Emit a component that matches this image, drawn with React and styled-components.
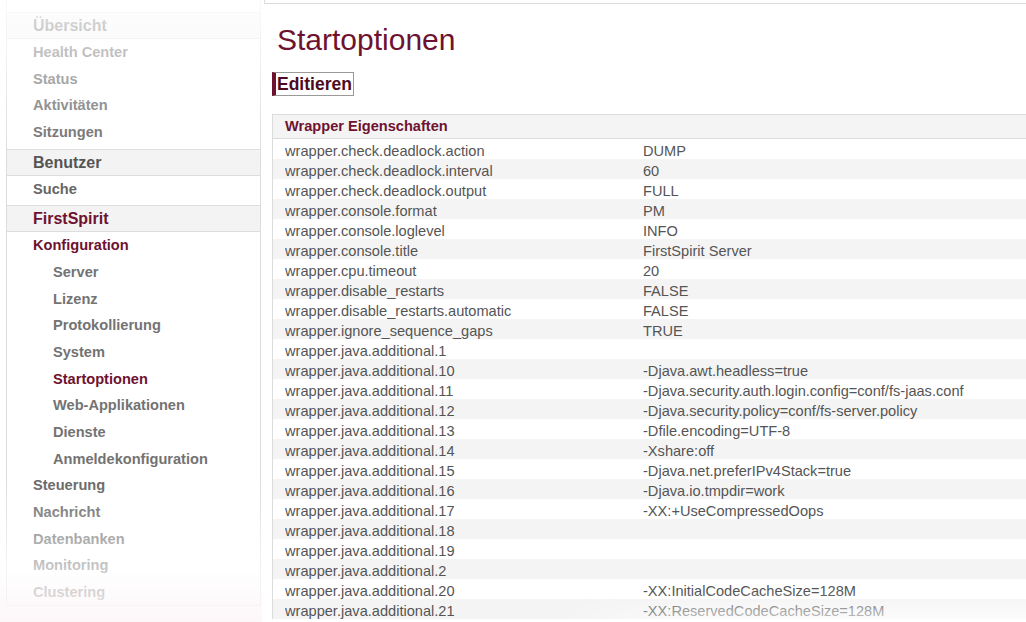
import React from "react";
import styled, { createGlobalStyle } from "styled-components";

const MAROON = "#6e1230";

const GlobalStyle = createGlobalStyle`
  html, body {
    margin: 0;
    padding: 0;
    background: #ffffff;
    overflow: hidden;
  }
  body {
    font-family: "Liberation Sans", Arial, Helvetica, sans-serif;
    -webkit-font-smoothing: antialiased;
  }
`;

const Page = styled.div`
  display: flex;
  align-items: flex-start;
  width: 1026px;
  height: 622px;
  overflow: hidden;
`;

const Sidebar = styled.nav`
  position: relative;
  flex: 0 0 255px;
  box-sizing: border-box;
  margin-left: 6px;
  padding-top: 9px;
  display: flex;
  flex-direction: column;
  border: 1px solid #dcdcdc;
  border-top: none;

  &::before {
    content: "";
    position: absolute;
    left: -2px;
    right: -2px;
    top: 0;
    height: 160px;
    pointer-events: none;
    background: linear-gradient(
      to bottom,
      rgba(255, 255, 255, 0.84) 0%,
      rgba(255, 255, 255, 0.62) 30%,
      rgba(255, 255, 255, 0.38) 55%,
      rgba(255, 255, 255, 0) 100%
    );
  }

  &::after {
    content: "";
    position: absolute;
    left: -8px;
    right: -2px;
    bottom: -18px;
    height: 143px;
    pointer-events: none;
    background: linear-gradient(
      to top,
      rgba(252, 245, 247, 0.88) 0%,
      rgba(253, 248, 249, 0.8) 14%,
      rgba(255, 255, 255, 0.64) 37%,
      rgba(255, 255, 255, 0.48) 57%,
      rgba(255, 255, 255, 0.22) 77%,
      rgba(255, 255, 255, 0) 100%
    );
  }
`;

const NavHeader = styled.div`
  box-sizing: border-box;
  height: 27px;
  margin-top: 3px;
  padding-left: 26px;
  border-top: 1px solid #dedede;
  border-bottom: 1px solid #dedede;
  background: #f3f3f3;
  color: ${(p) => (p.$active ? MAROON : "#555555")};
  font-size: 16px;
  font-weight: bold;
  line-height: 25px;
  white-space: nowrap;
`;

const NavItem = styled.div`
  height: 26.67px;
  padding-left: ${(p) => (p.$sub ? "46px" : "26px")};
  color: ${(p) => (p.$active ? MAROON : p.$sub ? "#737373" : "#666666")};
  font-size: 14.6px;
  font-weight: bold;
  line-height: 26.67px;
  white-space: nowrap;
`;

const Main = styled.main`
  position: relative;
  flex: 1 1 auto;
  min-width: 0;
  margin-left: 3px;
  display: flex;
  flex-direction: column;
  align-items: flex-start;
  height: 622px;
  overflow: hidden;

  &::after {
    content: "";
    position: absolute;
    right: 0;
    bottom: 0;
    width: 480px;
    height: 30px;
    pointer-events: none;
    background: linear-gradient(
      to top,
      rgba(255, 255, 255, 0.7) 0%,
      rgba(255, 255, 255, 0.45) 40%,
      rgba(255, 255, 255, 0) 100%
    );
    -webkit-mask-image: linear-gradient(to right, transparent 0%, #000 32%);
    mask-image: linear-gradient(to right, transparent 0%, #000 32%);
  }
`;

const TopBar = styled.div`
  align-self: stretch;
  height: 3px;
  border-left: 1px solid #dcdcdc;
  border-bottom: 1px solid #dcdcdc;
`;

const Content = styled.div`
  display: flex;
  flex-direction: column;
  align-items: flex-start;
  padding-left: 8px;
`;

const Title = styled.h1`
  margin: 18px 0 0 0;
  padding-left: 5px;
  color: ${MAROON};
  font-size: 30px;
  font-weight: normal;
  line-height: 36px;
  white-space: nowrap;
`;

const EditButton = styled.button`
  margin-top: 14px;
  box-sizing: border-box;
  height: 24px;
  padding: 0 1px 0 1px;
  border: 1px solid #9a9a9a;
  border-left: 4px solid ${MAROON};
  border-radius: 0;
  background: #ffffff;
  color: #4e0a22;
  font-family: inherit;
  font-size: 17.5px;
  font-weight: bold;
  line-height: 22px;
  cursor: pointer;
`;

const Table = styled.div`
  margin-top: 18px;
  width: 820px;
  border-left: 1px solid #dcdcdc;
`;

const TableHead = styled.div`
  box-sizing: border-box;
  height: 25px;
  padding-left: 12px;
  border-top: 1px solid #dcdcdc;
  border-bottom: 1px solid #dcdcdc;
  background: #f4f4f4;
  color: ${MAROON};
  font-size: 14.6px;
  font-weight: bold;
  line-height: 23px;
`;

const Row = styled.div`
  display: grid;
  grid-template-columns: 358px 1fr;
  box-sizing: border-box;
  height: 20px;
  padding: 2px 0 0 12px;
  overflow: hidden;
  background: ${(p) => (p.$odd ? "#f4f4f4" : "#ffffff")};
  color: #555555;
  font-size: 14.6px;
  line-height: 20px;
  white-space: nowrap;
`;

const Cell = styled.span`
  overflow: hidden;
`;

const nav = [
  { type: "header", label: "Übersicht" },
  { label: "Health Center" },
  { label: "Status" },
  { label: "Aktivitäten" },
  { label: "Sitzungen" },
  { type: "header", label: "Benutzer" },
  { label: "Suche" },
  { type: "header", label: "FirstSpirit", active: true },
  { label: "Konfiguration", active: true },
  { label: "Server", sub: true },
  { label: "Lizenz", sub: true },
  { label: "Protokollierung", sub: true },
  { label: "System", sub: true },
  { label: "Startoptionen", sub: true, active: true },
  { label: "Web-Applikationen", sub: true },
  { label: "Dienste", sub: true },
  { label: "Anmeldekonfiguration", sub: true },
  { label: "Steuerung" },
  { label: "Nachricht" },
  { label: "Datenbanken" },
  { label: "Monitoring" },
  { label: "Clustering" },
];

const rows = [
  ["wrapper.check.deadlock.action", "DUMP"],
  ["wrapper.check.deadlock.interval", "60"],
  ["wrapper.check.deadlock.output", "FULL"],
  ["wrapper.console.format", "PM"],
  ["wrapper.console.loglevel", "INFO"],
  ["wrapper.console.title", "FirstSpirit Server"],
  ["wrapper.cpu.timeout", "20"],
  ["wrapper.disable_restarts", "FALSE"],
  ["wrapper.disable_restarts.automatic", "FALSE"],
  ["wrapper.ignore_sequence_gaps", "TRUE"],
  ["wrapper.java.additional.1", ""],
  ["wrapper.java.additional.10", "-Djava.awt.headless=true"],
  ["wrapper.java.additional.11", "-Djava.security.auth.login.config=conf/fs-jaas.conf"],
  ["wrapper.java.additional.12", "-Djava.security.policy=conf/fs-server.policy"],
  ["wrapper.java.additional.13", "-Dfile.encoding=UTF-8"],
  ["wrapper.java.additional.14", "-Xshare:off"],
  ["wrapper.java.additional.15", "-Djava.net.preferIPv4Stack=true"],
  ["wrapper.java.additional.16", "-Djava.io.tmpdir=work"],
  ["wrapper.java.additional.17", "-XX:+UseCompressedOops"],
  ["wrapper.java.additional.18", ""],
  ["wrapper.java.additional.19", ""],
  ["wrapper.java.additional.2", ""],
  ["wrapper.java.additional.20", "-XX:InitialCodeCacheSize=128M"],
  ["wrapper.java.additional.21", "-XX:ReservedCodeCacheSize=128M"],
];

export default function App() {
  return (
    <>
      <GlobalStyle />
      <Page>
        <Sidebar>
          {nav.map((n) =>
            n.type === "header" ? (
              <NavHeader key={n.label} $active={n.active}>
                {n.label}
              </NavHeader>
            ) : (
              <NavItem key={n.label} $sub={n.sub} $active={n.active}>
                {n.label}
              </NavItem>
            )
          )}
        </Sidebar>
        <Main>
          <TopBar />
          <Content>
            <Title>Startoptionen</Title>
            <EditButton type="button">Editieren</EditButton>
            <Table>
              <TableHead>Wrapper Eigenschaften</TableHead>
              {rows.map(([k, v], i) => (
                <Row key={k} $odd={i % 2 === 1}>
                  <Cell>{k}</Cell>
                  <Cell>{v}</Cell>
                </Row>
              ))}
            </Table>
          </Content>
        </Main>
      </Page>
    </>
  );
}
